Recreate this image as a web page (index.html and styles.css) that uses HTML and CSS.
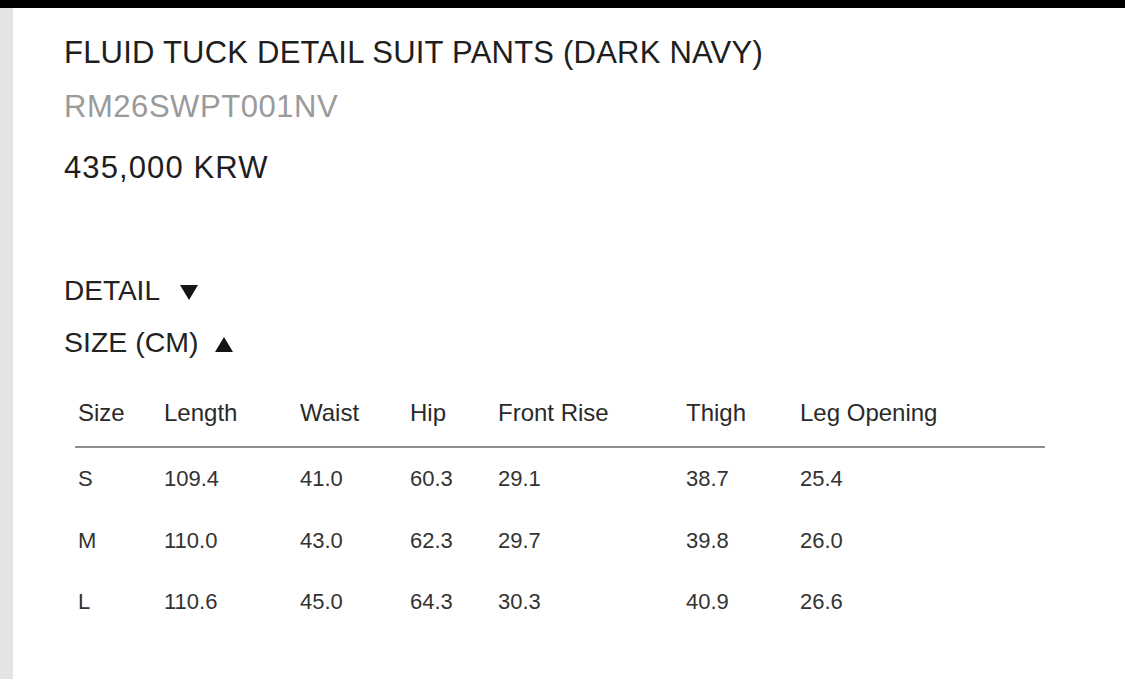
FILE: index.html
```html
<!DOCTYPE html>
<html lang="en">
<head>
<meta charset="utf-8">
<title>FLUID TUCK DETAIL SUIT PANTS (DARK NAVY)</title>
<link rel="stylesheet" href="styles.css">
</head>
<body>
<div class="topbar"></div>
<div class="layout">
  <div class="sidebar"></div>
  <main class="content">
    <h1 class="title">FLUID TUCK DETAIL SUIT PANTS (DARK NAVY)</h1>
    <p class="sku">RM26SWPT001NV</p>
    <p class="price">435,000 KRW</p>
    <div class="toggle toggle-detail">DETAIL <span class="tri tri-down"></span></div>
    <div class="toggle toggle-size">SIZE (CM) <span class="tri tri-up"></span></div>
    <table class="sizes">
      <colgroup>
        <col class="c-size"><col class="c-length"><col class="c-waist"><col class="c-hip"><col class="c-rise"><col class="c-thigh"><col class="c-leg">
      </colgroup>
      <thead>
        <tr><th>Size</th><th>Length</th><th>Waist</th><th>Hip</th><th>Front Rise</th><th>Thigh</th><th>Leg Opening</th></tr>
      </thead>
      <tbody>
        <tr><td>S</td><td>109.4</td><td>41.0</td><td>60.3</td><td>29.1</td><td>38.7</td><td>25.4</td></tr>
        <tr><td>M</td><td>110.0</td><td>43.0</td><td>62.3</td><td>29.7</td><td>39.8</td><td>26.0</td></tr>
        <tr><td>L</td><td>110.6</td><td>45.0</td><td>64.3</td><td>30.3</td><td>40.9</td><td>26.6</td></tr>
      </tbody>
    </table>
  </main>
</div>
</body>
</html>
```
FILE: styles.css
```css
html, body {
  margin: 0;
  padding: 0;
  background: #ffffff;
  font-family: "Liberation Sans", Arial, sans-serif;
  color: #222222;
}
.topbar {
  height: 8px;
  background: #000000;
}
.layout {
  display: flex;
  min-height: 671px;
}
.sidebar {
  width: 13px;
  background: #e4e4e6;
  flex: none;
}
.content {
  flex: 1;
  padding: 30px 0 0 51px;
}
.title {
  margin: 0;
  font-size: 31px;
  line-height: 30px;
  font-weight: normal;
  color: #1e1e1e;
  letter-spacing: 0.22px;
}
.sku {
  margin: 24px 0 0;
  font-size: 31px;
  line-height: 30px;
  letter-spacing: 0.55px;
  color: #9a9a9a;
}
.price {
  margin: 31px 0 0;
  font-size: 31px;
  line-height: 30px;
  letter-spacing: 1.1px;
  color: #1e1e1e;
}
.toggle {
  display: flex;
  align-items: flex-end;
  font-size: 28px;
  line-height: 27px;
  color: #222222;
}
.toggle-detail {
  margin-top: 94px;
}
.toggle-size {
  margin-top: 24px;
  font-size: 28.5px;
  line-height: 28px;
}
.tri {
  display: inline-block;
  width: 0;
  height: 0;
  border-left: 9.5px solid transparent;
  border-right: 9.5px solid transparent;
}
.tri-down {
  margin: 0 0 4px 20px;
  border-top: 15px solid #151515;
}
.tri-up {
  margin: 0 0 4px 16px;
  border-bottom: 15px solid #151515;
}
.sizes {
  margin: 45px 0 0 11px;
  width: 970px;
  border-collapse: collapse;
  table-layout: fixed;
}
.c-size { width: 89px; }
.c-length { width: 136px; }
.c-waist { width: 110px; }
.c-hip { width: 88px; }
.c-rise { width: 188px; }
.c-thigh { width: 114px; }
.sizes th {
  text-align: left;
  font-weight: normal;
  font-size: 24px;
  line-height: 24px;
  color: #2a2a2a;
  padding: 0 0 21px 0;
  border-bottom: 2px solid #8e8e8e;
}
.sizes td {
  font-size: 22px;
  line-height: 22px;
  color: #333333;
  padding: 20px 0 19.5px 0;
}
.sizes th:first-child,
.sizes td:first-child {
  padding-left: 3px;
}
```
